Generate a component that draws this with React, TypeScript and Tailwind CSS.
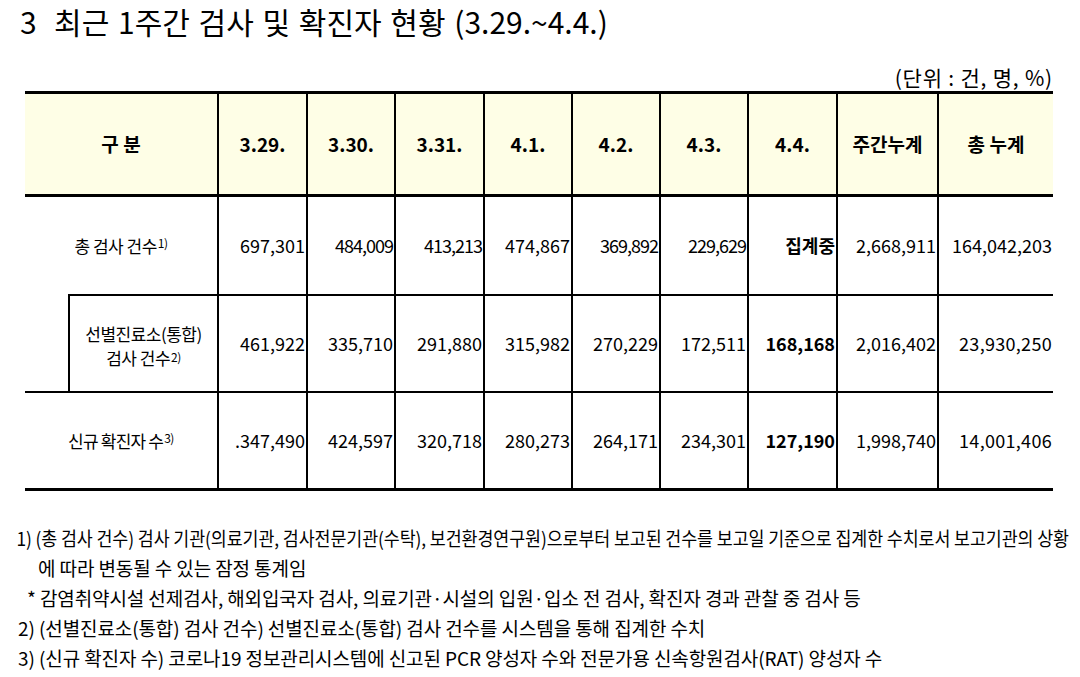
import React from 'react';

const cols = 'grid grid-cols-[192px_89px_88px_89px_88px_88px_88px_89px_101px_116px]';

const heads = ['3.29.', '3.30.', '3.31.', '4.1.', '4.2.', '4.3.', '4.4.', '주간누계', '총 누계'];

// [value, tracking class]
const rows: [string, string][][] = [
  [
    ['697,301', ''],
    ['484,009', 'tracking-[-1px]'],
    ['413,213', 'tracking-[-1px]'],
    ['474,867', ''],
    ['369,892', 'tracking-[-1px]'],
    ['229,629', 'tracking-[-1px]'],
    ['집계중', ''],
    ['2,668,911', ''],
    ['164,042,203', ''],
  ],
  [
    ['461,922', ''],
    ['335,710', ''],
    ['291,880', ''],
    ['315,982', ''],
    ['270,229', ''],
    ['172,511', ''],
    ['168,168', ''],
    ['2,016,402', ''],
    ['23,930,250', 'tracking-[0.3px]'],
  ],
  [
    ['.347,490', ''],
    ['424,597', ''],
    ['320,718', ''],
    ['280,273', ''],
    ['264,171', ''],
    ['234,301', ''],
    ['127,190', ''],
    ['1,998,740', ''],
    ['14,001,406', 'tracking-[0.3px]'],
  ],
];

function Sup({ n }: { n: string }) {
  return <sup className="text-[12px] relative -top-[3px] ml-[1px] tracking-[-0.5px]">{n}</sup>;
}

function Num({ v, t, bold, top }: { v: string; t: string; bold?: boolean; top?: boolean }) {
  return (
    <div
      className={`flex items-center justify-end border-l-2 border-black pr-[1px] text-[18px] ${t} ${
        bold ? 'font-bold' : ''
      } ${top ? 'border-t-2' : ''}`}
    >
      {v}
    </div>
  );
}

export default function App() {
  return (
    <div className="w-[1080px] h-[677px] bg-white text-black overflow-hidden font-['Noto_Sans_CJK_KR','Noto_Sans',sans-serif]">
      <h1 className="h-[40px] pl-[20px] pt-[2px] text-[30px] leading-[38px] whitespace-pre [word-spacing:2px]">
        3  최근 1주간 검사 및 확진자 현황 (3.29.~4.4.)
      </h1>

      <div className="mt-[23px] h-[28px] flex justify-end pr-[27px] text-[21px] leading-[28px] tracking-[0.8px]">
        (단위 : 건, 명, %)
      </div>

      <div className="ml-[25px] w-[1028px] border-t-[3px] border-b-[3px] border-black">
        {/* header */}
        <div className={`${cols} h-[103px] border-b-[3px] border-black bg-[#fefee6] text-[19px] font-bold`}>
          <div className="flex items-center justify-center whitespace-pre">구 분</div>
          {heads.map((h) => (
            <div key={h} className="flex items-center justify-center border-l-2 border-black">
              {h}
            </div>
          ))}
        </div>

        {/* 총 검사 건수 */}
        <div className={`${cols} h-[97px]`}>
          <div className="flex items-center justify-center text-[17px] tracking-[-0.5px]">
            총 검사 건수<Sup n="1)" />
          </div>
          {rows[0].map(([v, t], i) => (
            <Num key={i} v={v} t={t} bold={i === 6} />
          ))}
        </div>

        {/* 선별진료소 */}
        <div className={`${cols} h-[97px]`}>
          <div className="flex">
            <div className="w-[43px]" />
            <div className="flex-1 flex flex-col items-center justify-center pt-[4px] border-l-2 border-t-2 border-black text-[17px] leading-[24px] tracking-[-0.5px]">
              <span>선별진료소(통합)</span>
              <span>
                검사 건수<Sup n="2)" />
              </span>
            </div>
          </div>
          {rows[1].map(([v, t], i) => (
            <Num key={i} v={v} t={t} bold={i === 6} top />
          ))}
        </div>

        {/* 신규 확진자 수 */}
        <div className={`${cols} h-[97px] border-t-2 border-black`}>
          <div className="flex items-center justify-center text-[17px] tracking-[-0.8px]">
            신규 확진자 수<Sup n="3)" />
          </div>
          {rows[2].map(([v, t], i) => (
            <Num key={i} v={v} t={t} bold={i === 6} />
          ))}
        </div>
      </div>

      <div className="mt-[32px] text-[19px] leading-[30px] tracking-[-0.1px] whitespace-nowrap">
        <p className="pl-[18px] origin-left scale-x-[0.913]">
          1) (총 검사 건수) 검사 기관(의료기관, 검사전문기관(수탁), 보건환경연구원)으로부터 보고된 건수를 보고일 기준으로 집계한 수치로서 보고기관의 상황
        </p>
        <p className="pl-[38px]">에 따라 변동될 수 있는 잠정 통계임</p>
        <p className="pl-[27px]">* 감염취약시설 선제검사, 해외입국자 검사, 의료기관·시설의 입원·입소 전 검사, 확진자 경과 관찰 중 검사 등</p>
        <p className="pl-[18px]">2) (선별진료소(통합) 검사 건수) 선별진료소(통합) 검사 건수를 시스템을 통해 집계한 수치</p>
        <p className="pl-[18px]">3) (신규 확진자 수) 코로나19 정보관리시스템에 신고된 PCR 양성자 수와 전문가용 신속항원검사(RAT) 양성자 수</p>
      </div>
    </div>
  );
}
